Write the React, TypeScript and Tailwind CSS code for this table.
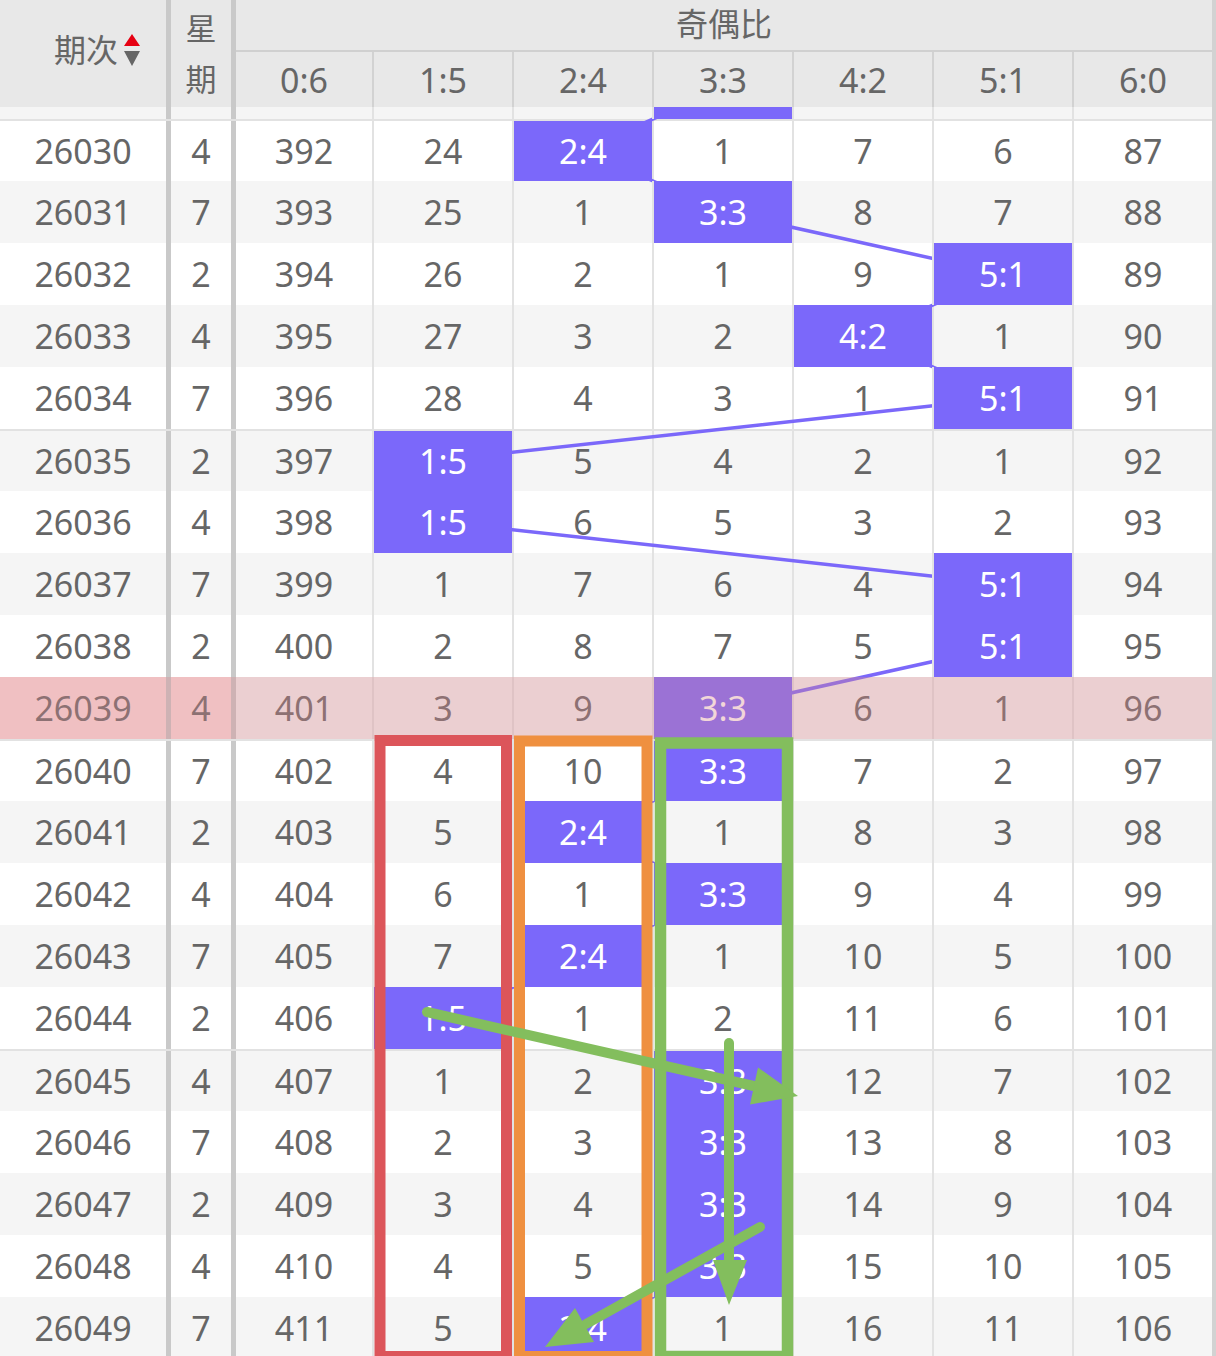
import React from "react";

const RATIOS = ["0:6", "1:5", "2:4", "3:3", "4:2", "5:1", "6:0"];
const PURPLE = "#7b68fa";
const ROW_H = 62;

// [issue, weekday, hit column, values per ratio column]
const ROWS: [number, number, number, number[]][] = [
  [26029, 2, 3, [391, 23, 5, 0, 6, 5, 86]],
  [26030, 4, 2, [392, 24, 0, 1, 7, 6, 87]],
  [26031, 7, 3, [393, 25, 1, 0, 8, 7, 88]],
  [26032, 2, 5, [394, 26, 2, 1, 9, 0, 89]],
  [26033, 4, 4, [395, 27, 3, 2, 0, 1, 90]],
  [26034, 7, 5, [396, 28, 4, 3, 1, 0, 91]],
  [26035, 2, 1, [397, 0, 5, 4, 2, 1, 92]],
  [26036, 4, 1, [398, 0, 6, 5, 3, 2, 93]],
  [26037, 7, 5, [399, 1, 7, 6, 4, 0, 94]],
  [26038, 2, 5, [400, 2, 8, 7, 5, 0, 95]],
  [26039, 4, 3, [401, 3, 9, 0, 6, 1, 96]],
  [26040, 7, 3, [402, 4, 10, 0, 7, 2, 97]],
  [26041, 2, 2, [403, 5, 0, 1, 8, 3, 98]],
  [26042, 4, 3, [404, 6, 1, 0, 9, 4, 99]],
  [26043, 7, 2, [405, 7, 0, 1, 10, 5, 100]],
  [26044, 2, 1, [406, 0, 1, 2, 11, 6, 101]],
  [26045, 4, 3, [407, 1, 2, 0, 12, 7, 102]],
  [26046, 7, 3, [408, 2, 3, 0, 13, 8, 103]],
  [26047, 2, 3, [409, 3, 4, 0, 14, 9, 104]],
  [26048, 4, 3, [410, 4, 5, 0, 15, 10, 105]],
  [26049, 7, 2, [411, 5, 0, 1, 16, 11, 106]],
];

const PINK_ROW = 10;

// centre x of a ratio column
const colX = (k: number) => (k === 0 ? 303 : 374 + (k - 1) * 140 + 69);
const rowY = (i: number) => i * ROW_H + 31;

function SortIcon() {
  return (
    <svg width="16" height="32" viewBox="0 0 16 32" className="ml-[6px]">
      <polygon points="8,0 16,12 0,12" fill="#e60012" />
      <polygon points="0,17 16,17 8,32" fill="#666666" />
    </svg>
  );
}

function Header() {
  return (
    <div className="flex h-[107px] bg-[#e8e8e8] text-[#666]">
      <div className="w-[171px] border-r-[5px] border-[#c9c9c9] flex items-center justify-end pr-[26px] pb-[7px]">
        <span className="text-[32px] leading-[40px]">期次</span>
        <SortIcon />
      </div>
      <div className="w-[65px] border-r-[5px] border-[#c9c9c9] flex flex-col items-center justify-center text-[31px] leading-[51px]">
        <span>星</span>
        <span>期</span>
      </div>
      <div className="flex-1 flex flex-col">
        <div className="h-[52px] border-b-2 border-[#d0d0d0] flex items-center justify-center text-[32px] leading-[40px] pb-[2px]">
          奇偶比
        </div>
        <div className="flex h-[55px]">
          {RATIOS.map((r, k) => (
            <div
              key={r}
              className={`${k === 0 ? "w-[136px]" : "w-[140px] border-l-2 border-[#d2d2d2]"} flex items-center justify-center text-[34px] leading-[44px]`}
            >
              {r}
            </div>
          ))}
        </div>
      </div>
    </div>
  );
}

function BodyRow({ i }: { i: number }) {
  const [issue, week, hit, vals] = ROWS[i];
  const groupStart = (i - 1) % 5 === 0;
  const pink = i === PINK_ROW;
  // first row sits mostly behind the header: nothing of its text shows
  const hidden = i === 0;
  const bg = i % 2 === 0 ? "bg-[#f5f5f5]" : "bg-white";
  return (
    <div className={`flex h-[62px] ${bg} ${groupStart ? "border-t-2 border-[#e2e2e2]" : ""}`}>
      <div className={`w-[171px] border-r-[5px] border-[#c9c9c9] flex items-center justify-center ${pink ? "bg-[#fcdede]" : ""}`}>
        {hidden ? null : issue}
      </div>
      <div className={`w-[65px] border-r-[5px] border-[#c9c9c9] flex items-center justify-center ${pink ? "bg-[#fcdede]" : ""}`}>
        {hidden ? null : week}
      </div>
      {vals.map((v, k) => {
        const w = k === 0 ? "w-[136px]" : "w-[140px] border-l-2 border-[#e2e2e2]";
        if (k === hit) {
          return (
            <div key={k} className={`${w} relative z-20 flex items-center justify-center text-white`}>
              <span className="absolute inset-0 bg-[#7b68fa]" />
              {hidden ? null : <span className="relative">{RATIOS[k]}</span>}
            </div>
          );
        }
        return (
          <div key={k} className={`${w} flex items-center justify-center`}>
            {hidden ? null : v}
          </div>
        );
      })}
    </div>
  );
}

function TrendLine() {
  const pts = ROWS.map(([, , hit], i) => `${colX(hit)},${rowY(i)}`).join(" ");
  return (
    <svg
      className="absolute left-0 top-0 z-10 pointer-events-none"
      width="1212"
      height={ROWS.length * ROW_H}
    >
      <polyline points={pts} fill="none" stroke={PURPLE} strokeWidth="3.5" strokeLinejoin="round" />
    </svg>
  );
}

function Annotations() {
  const green = "#83be5d";
  return (
    <svg className="absolute left-0 top-0 z-40 pointer-events-none" width="1216" height="1356">
      <rect x="380" y="740.5" width="126.5" height="616" fill="none" stroke="#dc555a" strokeWidth="11" />
      <rect x="519.5" y="741" width="127.5" height="615.5" fill="none" stroke="#ef9040" strokeWidth="11" />
      <rect x="660.5" y="743" width="127" height="613.5" fill="none" stroke={green} strokeWidth="11.5" />

      <line x1="427" y1="1012" x2="756" y2="1086.5" stroke={green} strokeWidth="10" strokeLinecap="round" />
      <polygon points="798,1096 758,1067.5 750,1104.5" fill={green} />

      <line x1="729" y1="1043" x2="729" y2="1264" stroke={green} strokeWidth="10" strokeLinecap="round" />
      <polygon points="713,1260 747,1260 729,1305" fill={green} />

      <line x1="760" y1="1227" x2="586" y2="1324" stroke={green} strokeWidth="10" strokeLinecap="round" />
      <polygon points="545,1347 575,1308 594,1342" fill={green} />
    </svg>
  );
}

export default function App() {
  return (
    <div
      className="relative w-[1216px] h-[1356px] overflow-hidden bg-white border-r-4 border-[#d2d2d2] text-[#666]"
      style={{ fontFamily: '"Noto Sans", "Noto Sans CJK SC", sans-serif' }}
    >
      <Header />
      <div className="relative h-[1249px] overflow-hidden text-[34px] leading-[44px]">
        <div className="relative mt-[-50px]">
          {ROWS.map((_, i) => (
            <BodyRow key={i} i={i} />
          ))}
          <TrendLine />
          {/* highlighted current issue */}
          <div className="absolute left-0 top-[620px] h-[62px] w-[1212px] bg-[rgba(217,134,140,0.34)] z-30" />
        </div>
      </div>
      <Annotations />
    </div>
  );
}
